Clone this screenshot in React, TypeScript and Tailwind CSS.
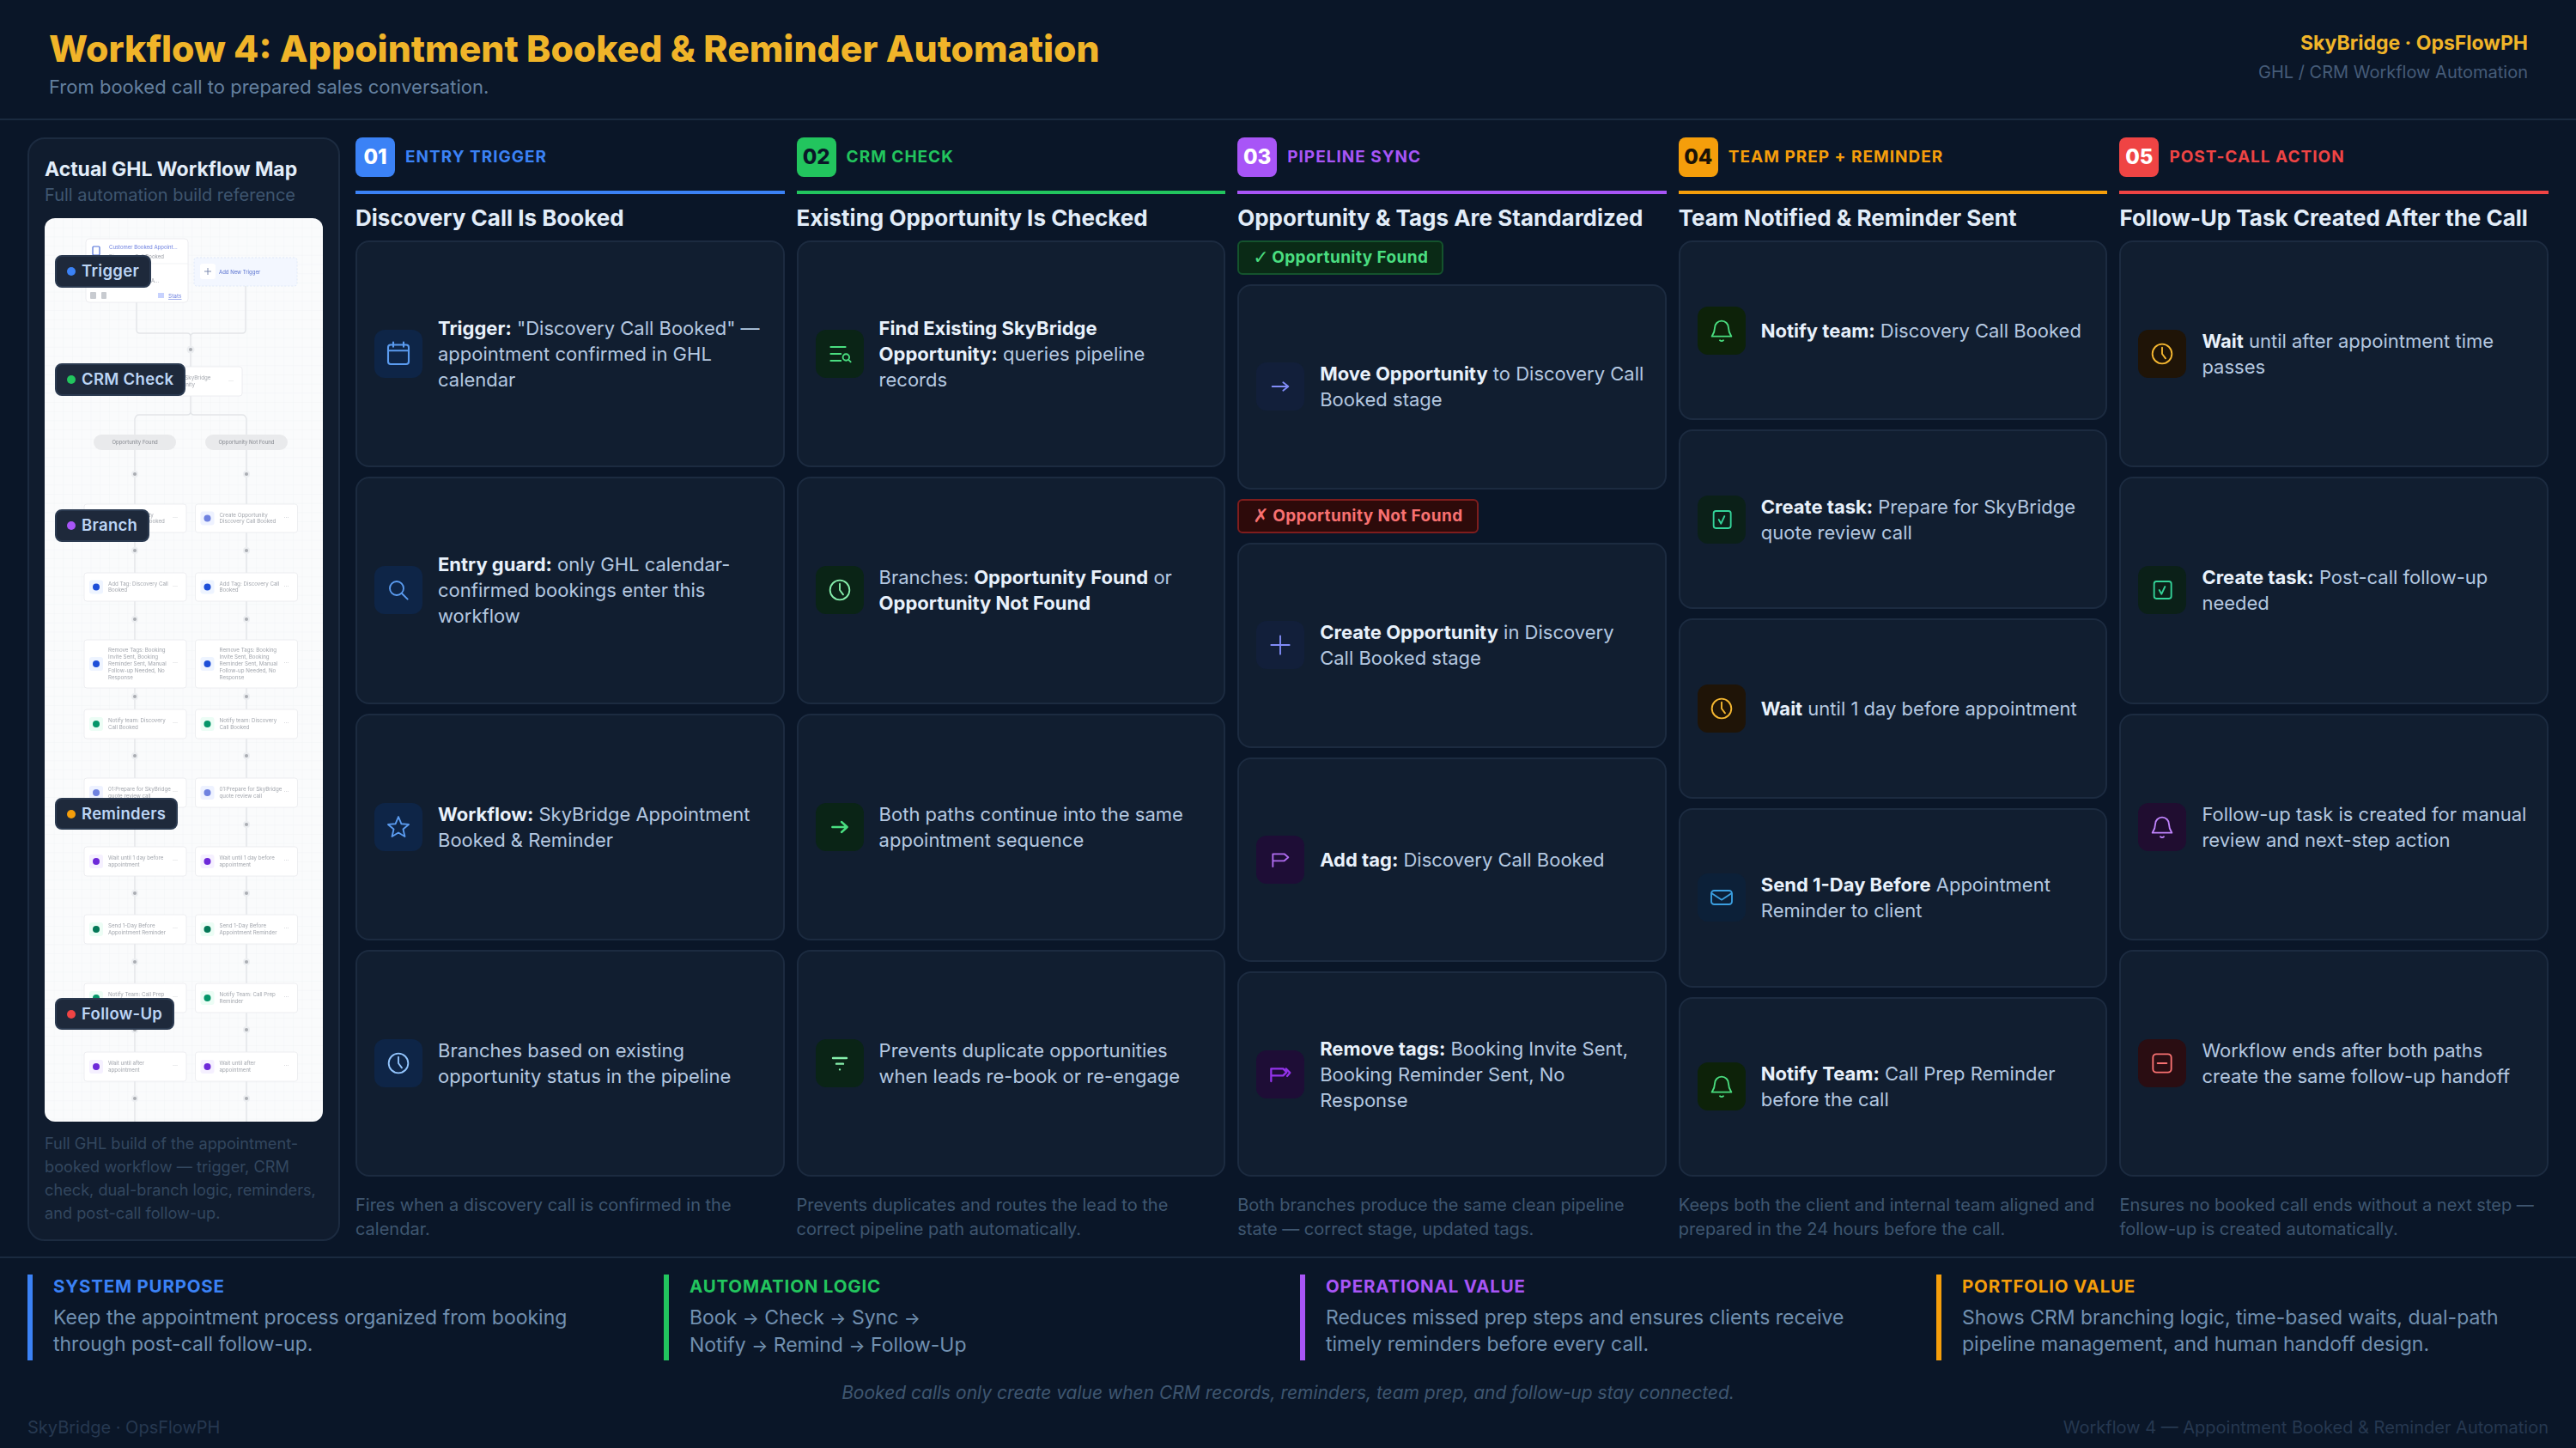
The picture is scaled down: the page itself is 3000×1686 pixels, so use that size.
import type { ReactNode } from 'react';

const FONT = "font-['Inter','Liberation_Sans',sans-serif]";

type IconProps = { children: ReactNode; size?: number; sw?: number };

function Ico({ children, size = 32, sw = 1.4 }: IconProps) {
  return (
    <svg width={size} height={size} viewBox="0 0 24 24" fill="none" stroke="currentColor" strokeWidth={sw} strokeLinecap="round" strokeLinejoin="round">
      {children}
    </svg>
  );
}

const CalendarIcon = () => (
  <Ico size={36}>
    <rect x="4" y="5" width="16" height="15" rx="2" />
    <path d="M4 9.500h16M8 3V6.500M16 3V6.500" />
  </Ico>
);
const SearchIcon = () => (
  <Ico>
    <circle cx="10.500" cy="10.500" r="6" />
    <path d="M15 15l5 5" />
  </Ico>
);
const StarIcon = () => (
  <Ico>
    <path d="M12 3l2.600 6.200 6.400.5-4.900 4.200 1.500 6.400L12 16.900l-5.600 3.400 1.500-6.400L3 9.700l6.400-.5z" />
  </Ico>
);
const ClockIcon = () => (
  <Ico>
    <circle cx="12" cy="12" r="8.500" />
    <path d="M12 6.500V12l3 4" />
  </Ico>
);
const ListSearchIcon = () => (
  <Ico>
    <path d="M4 6h13M4 12h9M4 18h9" />
    <circle cx="17.500" cy="15" r="2.800" />
    <path d="M20 17.500l1.500 1.500" />
  </Ico>
);
const ArrowIcon = () => (
  <Ico sw={1.8}>
    <path d="M5.500 12h13M13.500 7.500l5 4.500-5 4.500" />
  </Ico>
);
const ThinArrowIcon = () => (
  <Ico>
    <path d="M5 12h14M14.500 8.500l4.500 3.500-4.500 3.500" />
  </Ico>
);
const PlusIcon = () => (
  <Ico>
    <path d="M12 4v16M4 12h16" />
  </Ico>
);
const FilterIcon = () => (
  <Ico sw={1.8}>
    <path d="M6 7.500h12M9 12.500h6M12 17.500h.01" />
  </Ico>
);
const FlagIcon = () => (
  <Ico>
    <path d="M5.500 18V7h10l3.500 3-3.500 3h-10" />
  </Ico>
);
const FlagsIcon = () => (
  <Ico sw={1.7}>
    <path d="M4 18V7h10.500l3 3-3 3H4M17 7l3.500 3.500-2.500 3" />
  </Ico>
);
const BellIcon = () => (
  <Ico>
    <path d="M12 3.500a6 6 0 0 0-6 6c0 3.500-1.300 5.500-2.500 7.500h17c-1.200-2-2.500-4-2.500-7.500a6 6 0 0 0-6-6z" />
    <path d="M10.500 20.500q1.500 1.200 3 0" />
  </Ico>
);
const CheckSquareIcon = () => (
  <Ico>
    <rect x="5" y="4.500" width="15" height="15" rx="2" />
    <path d="M9.500 12l2 3.500 3-6.500" />
  </Ico>
);
const MailIcon = () => (
  <Ico>
    <rect x="3" y="6" width="18" height="12" rx="2.500" />
    <path d="M3.500 8.500L12 14l8.500-5.500" />
  </Ico>
);
const MinusSquareIcon = () => (
  <Ico>
    <rect x="4" y="4" width="16" height="16" rx="3" />
    <path d="M8 12h8" />
  </Ico>
);

type CardData = { icon: ReactNode; box: string; body: ReactNode };

const B = ({ children }: { children: ReactNode }) => (
  <strong className="font-bold text-[#e8f1fb]">{children}</strong>
);

const BLUE = 'bg-[#0e2547] text-[#5b9cf0]';
const GREEN = 'bg-[#0a2416] text-[#4ade80]';
const TEAL = 'bg-[#0b2018] text-[#34d399]';
const INDIGO = 'bg-[#121f3a] text-[#818cf8]';
const PURPLE = 'bg-[#1e0d36] text-[#b06cf0]';
const AMBER = 'bg-[#1f1407] text-[#f5b731]';
const SKY = 'bg-[#0c2038] text-[#3b9fe0]';
const LIME = 'bg-[#0d2209] text-[#4ade80]';
const VIOLET = 'bg-[#200d30] text-[#c084fc]';
const RED = 'bg-[#2a0d12] text-[#f87171]';

type ColumnData = {
  no: string;
  label: string;
  title: string;
  badge: string;
  text: string;
  rule: string;
  note: ReactNode;
  cards: CardData[];
};

const COLUMNS: ColumnData[] = [
  {
    no: '01',
    label: 'ENTRY TRIGGER',
    title: 'Discovery Call Is Booked',
    badge: 'bg-[#3b82f6] text-white',
    text: 'text-[#3b82f6]',
    rule: 'border-[#3b82f6]',
    note: 'Fires when a discovery call is confirmed in the calendar.',
    cards: [
      { icon: <CalendarIcon />, box: BLUE, body: <><B>Trigger:</B> "Discovery Call Booked" — appointment confirmed in GHL calendar</> },
      { icon: <SearchIcon />, box: BLUE, body: <><B>Entry guard:</B> only GHL calendar-confirmed bookings enter this workflow</> },
      { icon: <StarIcon />, box: BLUE, body: <><B>Workflow:</B> SkyBridge Appointment Booked &amp; Reminder</> },
      { icon: <ClockIcon />, box: BLUE + ' !text-[#93c5fd]', body: 'Branches based on existing opportunity status in the pipeline' },
    ],
  },
  {
    no: '02',
    label: 'CRM CHECK',
    title: 'Existing Opportunity Is Checked',
    badge: 'bg-[#22c55e] text-[#0a1628]',
    text: 'text-[#22c55e]',
    rule: 'border-[#22c55e]',
    note: 'Prevents duplicates and routes the lead to the correct pipeline path automatically.',
    cards: [
      { icon: <ListSearchIcon />, box: GREEN, body: <><B>Find Existing SkyBridge Opportunity:</B> queries pipeline records</> },
      { icon: <ClockIcon />, box: GREEN + ' !text-[#86efac]', body: <>Branches: <B>Opportunity Found</B> or <B>Opportunity Not Found</B></> },
      { icon: <ArrowIcon />, box: GREEN, body: 'Both paths continue into the same appointment sequence' },
      { icon: <FilterIcon />, box: GREEN + ' !text-[#86efac]', body: 'Prevents duplicate opportunities when leads re-book or re-engage' },
    ],
  },
  {
    no: '03',
    label: 'PIPELINE SYNC',
    title: 'Opportunity & Tags Are Standardized',
    badge: 'bg-[#a855f7] text-white',
    text: 'text-[#a855f7]',
    rule: 'border-[#a855f7]',
    note: 'Both branches produce the same clean pipeline state — correct stage, updated tags.',
    cards: [
      { icon: <ThinArrowIcon />, box: INDIGO, body: <><B>Move Opportunity</B> to Discovery Call Booked stage</> },
      { icon: <PlusIcon />, box: INDIGO, body: <><B>Create Opportunity</B> in Discovery Call Booked stage</> },
      { icon: <FlagIcon />, box: PURPLE, body: <><B>Add tag:</B> Discovery Call Booked</> },
      { icon: <FlagsIcon />, box: PURPLE + ' !text-[#9333ea]', body: <><B>Remove tags:</B> Booking Invite Sent, Booking Reminder Sent, No Response</> },
    ],
  },
  {
    no: '04',
    label: 'TEAM PREP + REMINDER',
    title: 'Team Notified & Reminder Sent',
    badge: 'bg-[#f59e0b] text-[#1a1207]',
    text: 'text-[#f59e0b]',
    rule: 'border-[#f59e0b]',
    note: 'Keeps both the client and internal team aligned and prepared in the 24 hours before the call.',
    cards: [
      { icon: <BellIcon />, box: LIME, body: <><B>Notify team:</B> Discovery Call Booked</> },
      { icon: <CheckSquareIcon />, box: TEAL, body: <><B>Create task:</B> Prepare for SkyBridge quote review call</> },
      { icon: <ClockIcon />, box: AMBER, body: <><B>Wait</B> until 1 day before appointment</> },
      { icon: <MailIcon />, box: SKY, body: <><B>Send 1-Day Before</B> Appointment Reminder to client</> },
      { icon: <BellIcon />, box: LIME, body: <><B>Notify Team:</B> Call Prep Reminder before the call</> },
    ],
  },
  {
    no: '05',
    label: 'POST-CALL ACTION',
    title: 'Follow-Up Task Created After the Call',
    badge: 'bg-[#ef4444] text-white',
    text: 'text-[#ef4444]',
    rule: 'border-[#ef4444]',
    note: 'Ensures no booked call ends without a next step — follow-up is created automatically.',
    cards: [
      { icon: <ClockIcon />, box: AMBER, body: <><B>Wait</B> until after appointment time passes</> },
      { icon: <CheckSquareIcon />, box: TEAL, body: <><B>Create task:</B> Post-call follow-up needed</> },
      { icon: <BellIcon />, box: VIOLET, body: 'Follow-up task is created for manual review and next-step action' },
      { icon: <MinusSquareIcon />, box: RED, body: 'Workflow ends after both paths create the same follow-up handoff' },
    ],
  },
];

function StepCard({ card }: { card: CardData }) {
  return (
    <div className="flex min-h-0 flex-1 items-center gap-[18px] rounded-[16px] border-2 border-[#1c2b40] bg-[#111e30] pl-[20px] pr-[20px]">
      <div className={`flex h-[56px] w-[56px] shrink-0 items-center justify-center rounded-[12px] ${card.box}`}>
        {card.icon}
      </div>
      <div className="text-[22px] leading-[30px] text-[#b4c8e0]">{card.body}</div>
    </div>
  );
}

function Pill({ children, tone }: { children: ReactNode; tone: string }) {
  return (
    <div className={`flex h-[40px] w-fit shrink-0 items-center gap-[6px] rounded-[6px] border-2 px-[16px] text-[19px] font-bold tracking-[0.4px] ${tone}`}>
      {children}
    </div>
  );
}

function Column({ col }: { col: ColumnData }) {
  const isPipeline = col.no === '03';
  return (
    <div className="flex min-w-0 flex-col">
      <div className={`flex items-center gap-[12px] border-b-4 pb-[16px] ${col.rule}`}>
        <div className={`flex h-[46px] w-[46px] items-center justify-center rounded-[8px] text-[24px] font-extrabold ${col.badge}`}>
          {col.no}
        </div>
        <span className={`text-[19px] font-bold tracking-[1px] ${col.text}`}>{col.label}</span>
      </div>
      <div className="flex h-[54px] items-center whitespace-nowrap text-[26px] font-bold text-[#e2edf9]">{col.title}</div>
      <div className="flex min-h-0 flex-1 flex-col gap-[11px]">
        {isPipeline && (
          <Pill tone="border-[#14532d] bg-[#0a2a16] text-[#4ade80]">
            <span className="w-[16px] font-['DejaVu_Sans',sans-serif] text-[22px] font-bold leading-none">✓</span>Opportunity Found
          </Pill>
        )}
        {isPipeline && <StepCard card={col.cards[0]} />}
        {isPipeline && (
          <Pill tone="border-[#7f1d1d] bg-[#2d0a0a] text-[#f87171]">
            <span className="w-[17px] font-['DejaVu_Sans',sans-serif] text-[22px] font-bold leading-none">✗</span>Opportunity Not Found
          </Pill>
        )}
        {(isPipeline ? col.cards.slice(1) : col.cards).map((card, i) => (
          <StepCard key={i} card={card} />
        ))}
      </div>
      <p className="mt-[19px] h-[56px] text-[20px] leading-[28px] text-[#3f5670]">{col.note}</p>
    </div>
  );
}

type NodeRow = { y: number; h: number; left: string[]; right?: string[]; color: string; tint: string };

const NODE_ROWS: NodeRow[] = [
  { y: 333, h: 33, left: ['Move Opportunity', 'Discovery Call Booked'], right: ['Create Opportunity', 'Discovery Call Booked'], color: '#6f82e0', tint: '#eef2ff' },
  { y: 413, h: 33, left: ['Add Tag: Discovery Call', 'Booked'], color: '#1d4ed8', tint: '#eef4ff' },
  { y: 491, h: 56, left: ['Remove Tags: Booking', 'Invite Sent, Booking', 'Reminder Sent, Manual', 'Follow-up Needed, No', 'Response'], color: '#1d4ed8', tint: '#eef4ff' },
  { y: 572, h: 34, left: ['Notify team: Discovery', 'Call Booked'], color: '#059669', tint: '#ecfdf5' },
  { y: 652, h: 34, left: ['01:Prepare for SkyBridge', 'quote review call'], color: '#6f82e0', tint: '#eef2ff' },
  { y: 732, h: 34, left: ['Wait until 1 day before', 'appointment'], color: '#6d28d9', tint: '#f5f0ff' },
  { y: 811, h: 34, left: ['Send 1-Day Before', 'Appointment Reminder'], color: '#047857', tint: '#ecfdf5' },
  { y: 891, h: 34, left: ['Notify Team: Call Prep', 'Reminder'], color: '#059669', tint: '#ecfdf5' },
  { y: 971, h: 34, left: ['Wait until after', 'appointment'], color: '#6d28d9', tint: '#f5f0ff' },
];

const DOT_YS = [298, 387, 467, 557, 626, 706, 786, 866, 945, 1025];

function MapNode({ x, row, lines }: { x: number; row: NodeRow; lines: string[] }) {
  const mid = row.y + row.h / 2;
  const lh = row.h > 40 ? 8 : 7.5;
  const top = mid - ((lines.length - 1) * lh) / 2 + 2;
  return (
    <g>
      <rect x={x} y={row.y} width="119" height={row.h} rx="3" fill="#fff" stroke="#e8eaee" strokeWidth="0.8" />
      <rect x={x + 6} y={mid - 8} width="16" height="16" rx="3" fill={row.tint} />
      <circle cx={x + 14} cy={mid} r="4" fill={row.color} />
      {lines.map((l, i) => (
        <text key={i} x={x + 28} y={top + i * lh} fontSize="6.2" fill="#a2a6ad">{l}</text>
      ))}
      <text x={x + 103} y={mid + 1} fontSize="7" fill="#c3c6cb">···</text>
    </g>
  );
}

function WorkflowMap() {
  return (
    <svg viewBox="0 0 324 1052" width="324" height="1052" className="block blur-[0.5px]">
      <defs>
        <pattern id="mapgrid" width="10.700" height="10.700" patternUnits="userSpaceOnUse">
          <path d="M10.700 0H0V10.700" fill="none" stroke="#eef1f4" strokeWidth="0.7" />
        </pattern>
      </defs>
      <rect width="324" height="1052" fill="#fafbfc" />
      <rect width="324" height="1052" fill="url(#mapgrid)" />
      <g fill="none" stroke="#e3e5e8" strokeWidth="1.400">
        <path d="M107 98V130q0 4 4 4H166q4 0 4 4M234 79V130q0 4-4 4H174q-4 0-4 4V173" />
        <path d="M170 207V225M170 225q0 4-4 4H110q-4 0-5 5V333M170 225q0 4 4 4H230q4 0 5 5V333" />
        <path d="M105 366V413M235 366V413M105 446V491M235 446V491M105 547V572M235 547V572M105 606V652M235 606V652M105 686V732M235 686V732M105 766V811M235 766V811M105 845V891M235 845V891M105 925V971M235 925V971M105 1005V1052M235 1005V1052" />
      </g>
      <rect x="48" y="24" width="119" height="74" rx="4" fill="#fff" stroke="#e8eaee" strokeWidth="0.8" />
      <rect x="56" y="33" width="8" height="10" rx="1" fill="none" stroke="#4f6fd8" strokeWidth="1.200" />
      <text x="75" y="36" fontSize="6" fill="#6f82e0">Customer Booked Appoint...</text>
      <text x="75" y="47" fontSize="6" fill="#9a9ea6">Discovery Call Booked</text>
      <path d="M48 53H167" stroke="#eceef1" strokeWidth="0.7" />
      <text x="75" y="63" fontSize="6" fill="#9a9ea6">Booked Contact"</text>
      <text x="75" y="75" fontSize="6" fill="#9a9ea6">Calendar Charlie A...</text>
      <rect x="53" y="86" width="7" height="8" rx="1" fill="#c8cbd0" />
      <rect x="66" y="86" width="6" height="8" rx="1" fill="#c8cbd0" />
      <text x="144" y="93" fontSize="6.500" fill="#6f82e0" textDecoration="underline">Stats</text>
      <rect x="132" y="87" width="7" height="6" fill="#c7d2fe" />
      <rect x="174" y="46" width="120" height="33" rx="3" fill="#f3f7ff" stroke="#dbe6f8" strokeWidth="0.8" strokeDasharray="2 2" />
      <rect x="181" y="53" width="18" height="18" rx="3" fill="#fff" />
      <path d="M186 62h8M190 58v8" stroke="#6f7fa8" strokeWidth="0.900" />
      <text x="203" y="65" fontSize="6" fill="#5a73d0">Add New Trigger</text>
      <circle cx="170" cy="153" r="4.500" fill="#eceef1" />
      <circle cx="170" cy="153" r="2" fill="#a9acb2" />
      <rect x="110" y="173" width="120" height="34" rx="3" fill="#fff" stroke="#e8eaee" strokeWidth="0.8" />
      <text x="140" y="188" fontSize="6.200" fill="#a2a6ad">Finding SkyBridge</text>
      <text x="140" y="196" fontSize="6.200" fill="#a2a6ad">Opportunity</text>
      <text x="214" y="192" fontSize="7" fill="#c3c6cb">···</text>
      <rect x="57" y="252" width="96" height="18" rx="9" fill="#e9eaec" />
      <rect x="187" y="252" width="96" height="18" rx="9" fill="#e9eaec" />
      <text x="105" y="263" fontSize="6" fill="#85888f" textAnchor="middle">Opportunity Found</text>
      <text x="235" y="263" fontSize="6" fill="#85888f" textAnchor="middle">Opportunity Not Found</text>
      {DOT_YS.map((y) => (
        <g key={y}>
          <circle cx="105" cy={y} r="4" fill="#eceef1" />
          <circle cx="105" cy={y} r="2" fill="#a9acb2" />
          <circle cx="235" cy={y} r="4" fill="#eceef1" />
          <circle cx="235" cy={y} r="2" fill="#a9acb2" />
        </g>
      ))}
      {NODE_ROWS.map((row) => (
        <g key={row.y}>
          <MapNode x={46} row={row} lines={row.left} />
          <MapNode x={175.500} row={row} lines={row.right ?? row.left} />
        </g>
      ))}
    </svg>
  );
}

const MAP_TAGS = [
  { label: 'Trigger', dot: 'bg-[#3b82f6]', pos: 'top-[43px] h-[38px]' },
  { label: 'CRM Check', dot: 'bg-[#22c55e]', pos: 'top-[169px] h-[38px]' },
  { label: 'Branch', dot: 'bg-[#a855f7]', pos: 'top-[339px] h-[38px]' },
  { label: 'Reminders', dot: 'bg-[#f59e0b]', pos: 'top-[675px] h-[37px]' },
  { label: 'Follow-Up', dot: 'bg-[#ef4444]', pos: 'top-[908px] h-[37px]' },
];

function Sidebar() {
  return (
    <aside className="flex w-[364px] shrink-0 flex-col rounded-[20px] border-2 border-[#1c2b40] bg-[#101c2e] px-[18px] pb-[12px] pt-[19px]">
      <div className="text-[23px] font-bold leading-[32px] text-[#e2edf9]">Actual GHL Workflow Map</div>
      <div className="mt-[0px] text-[20px] leading-[28px] text-[#3f5670]">Full automation build reference</div>
      <div className="relative mt-[13px] h-[1052px] w-[324px] overflow-hidden rounded-[12px]">
        <WorkflowMap />
        {MAP_TAGS.map((t) => (
          <div
            key={t.label}
            className={`absolute left-[12px] flex items-center gap-[7px] rounded-[8px] border-2 border-[#2b3a50] bg-[#1e293b] pl-[12px] pr-[12px] text-[18.500px] font-semibold tracking-[0.3px] text-[#bcd5f5] ${t.pos}`}
          >
            <span className={`h-[10px] w-[10px] rounded-full ${t.dot}`} />
            {t.label}
          </div>
        ))}
      </div>
      <p className="mt-[12px] text-[18.200px] leading-[27px] text-[#33475f]">
        Full GHL build of the appointment-booked workflow — trigger, CRM check, dual-branch logic, reminders, and post-call follow-up.
      </p>
    </aside>
  );
}

const Ar = () => <span className="text-[20px]">→</span>;

const SUMMARY: { head: string; bar: string; text: string; lines: ReactNode[] }[] = [
  { head: 'SYSTEM PURPOSE', bar: 'border-[#3b82f6]', text: 'text-[#3b82f6]', lines: ['Keep the appointment process organized from booking', 'through post-call follow-up.'] },
  {
    head: 'AUTOMATION LOGIC',
    bar: 'border-[#22c55e]',
    text: 'text-[#22c55e]',
    lines: [
      <>Book <Ar /> Check <Ar /> Sync <Ar /></>,
      <>Notify <Ar /> Remind <Ar /> Follow-Up</>,
    ],
  },
  { head: 'OPERATIONAL VALUE', bar: 'border-[#a855f7]', text: 'text-[#a855f7]', lines: ['Reduces missed prep steps and ensures clients receive', 'timely reminders before every call.'] },
  { head: 'PORTFOLIO VALUE', bar: 'border-[#f59e0b]', text: 'text-[#f59e0b]', lines: ['Shows CRM branching logic, time-based waits, dual-path', 'pipeline management, and human handoff design.'] },
];

export default function App() {
  return (
    <div className={`flex h-[1686px] w-[3000px] flex-col overflow-hidden bg-[#0a1628] ${FONT}`}>
      <header className="flex h-[140px] shrink-0 items-start justify-between border-b-2 border-[#1a2a3f] pl-[57px] pr-[56px] pt-[31px]">
        <div>
          <h1 className="text-[42.700px] font-extrabold leading-[52px] text-[#f0b429]">Workflow 4: Appointment Booked &amp; Reminder Automation</h1>
          <div className="mt-[2px] text-[22px] leading-[32px] text-[#64809f]">From booked call to prepared sales conversation.</div>
        </div>
        <div className="mt-[3px] text-right">
          <div className="text-[23px] font-bold leading-[32px] text-[#f0b429]">SkyBridge · OpsFlowPH</div>
          <div className="mt-[3px] text-[20px] leading-[30px] text-[#465c78]">GHL / CRM Workflow Automation</div>
        </div>
      </header>

      <main className="flex min-h-0 flex-1 gap-[18px] pb-[18px] pl-[32px] pr-[32px] pt-[20px]">
        <Sidebar />
        <div className="grid min-w-0 flex-1 grid-cols-5 gap-[14px]">
          {COLUMNS.map((col) => (
            <Column key={col.no} col={col} />
          ))}
        </div>
      </main>

      <section className="h-[223px] shrink-0 border-t-2 border-[#1a2a3f] px-[32px] pt-[19px]">
        <div className="grid grid-cols-4 gap-[28px]">
          {SUMMARY.map((s) => (
            <div key={s.head} className={`h-[100px] border-l-[6px] pl-[24px] ${s.bar}`}>
              <div className="pt-[1px]">
                <div className={`text-[20.500px] font-bold leading-[26px] tracking-[0.8px] ${s.text}`}>{s.head}</div>
              </div>
              <div className="mt-[8px] text-[23px] leading-[31px] text-[#7190b0]">
                {s.lines.map((l, i) => (
                  <div key={i} className="whitespace-nowrap">{l}</div>
                ))}
              </div>
            </div>
          ))}
        </div>
        <div className="mt-[24px] text-center text-[21px] italic leading-[28px] text-[#3f5670]">
          Booked calls only create value when CRM records, reminders, team prep, and follow-up stay connected.
        </div>
        <div className="mt-[12px] flex justify-between text-[20px] leading-[28px] text-[#263850]">
          <span>SkyBridge · OpsFlowPH</span>
          <span>Workflow 4 — Appointment Booked &amp; Reminder Automation</span>
        </div>
      </section>
    </div>
  );
}
